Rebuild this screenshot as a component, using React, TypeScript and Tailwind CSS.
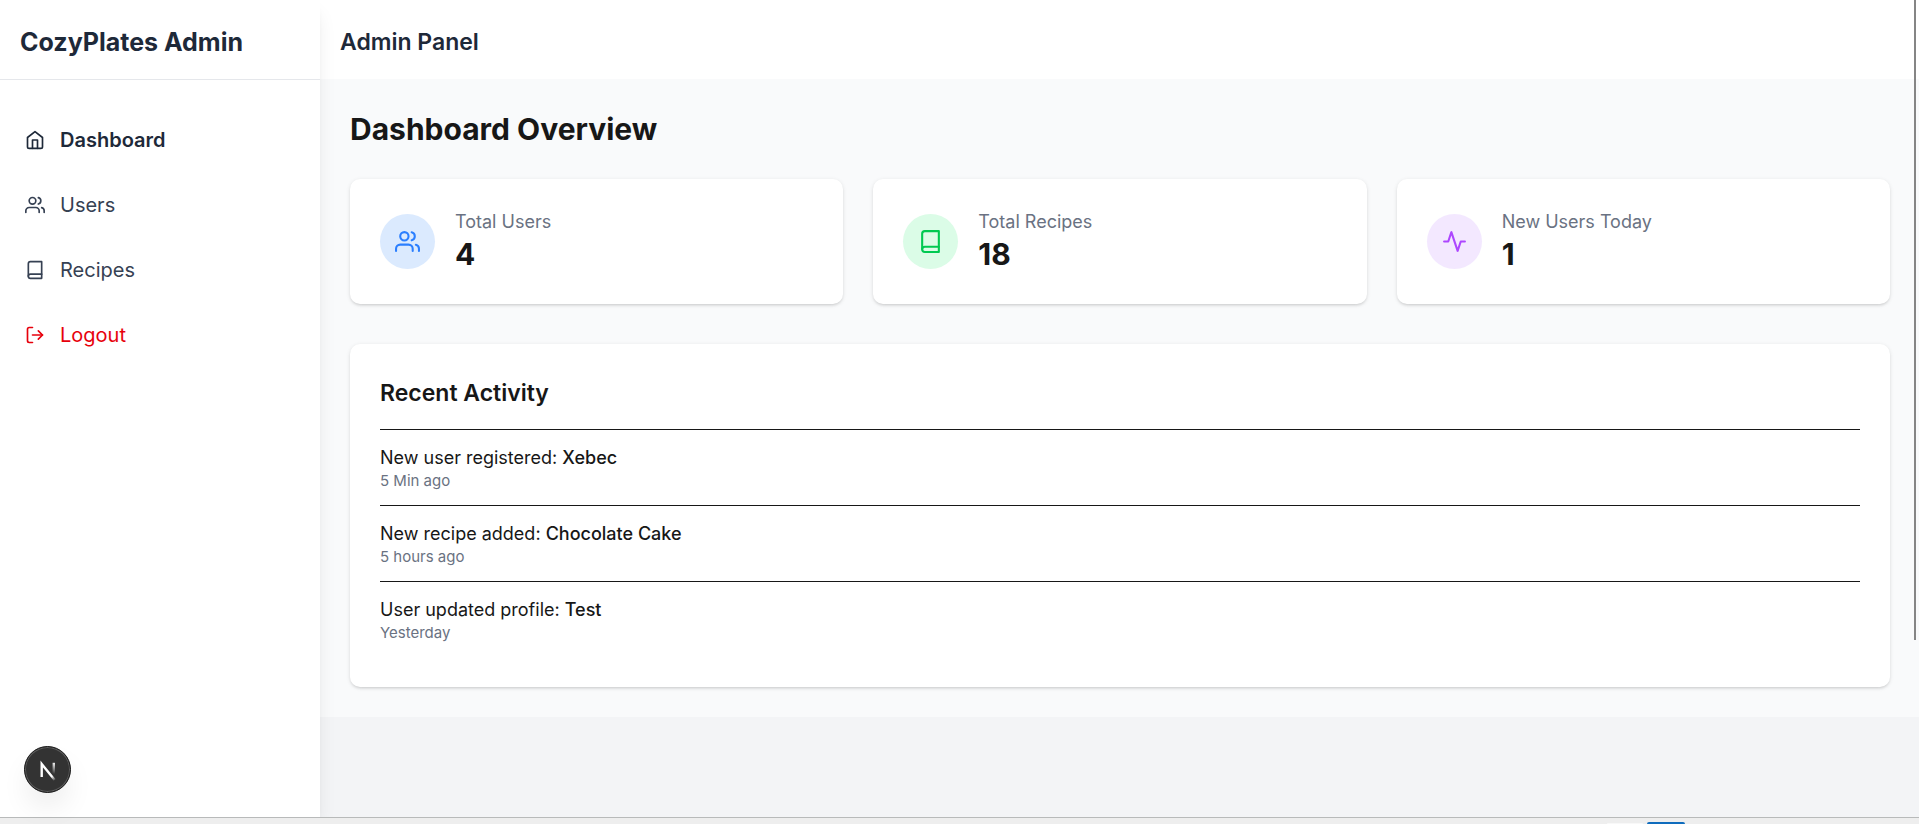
import type { ReactNode } from "react";
import { FiActivity, FiBook, FiHome, FiLogOut, FiUsers } from "react-icons/fi";
import type { IconType } from "react-icons";

type NavItem = { label: string; icon: IconType; tone: string };

const navItems: NavItem[] = [
  { label: "Dashboard", icon: FiHome, tone: "font-semibold text-gray-800" },
  { label: "Users", icon: FiUsers, tone: "text-gray-700" },
  { label: "Recipes", icon: FiBook, tone: "text-gray-700" },
];

type Stat = { label: string; value: number; icon: IconType; tone: string };

const stats: Stat[] = [
  { label: "Total Users", value: 4, icon: FiUsers, tone: "bg-blue-100 text-blue-500" },
  { label: "Total Recipes", value: 18, icon: FiBook, tone: "bg-green-100 text-green-500" },
  { label: "New Users Today", value: 1, icon: FiActivity, tone: "bg-purple-100 text-purple-500" },
];

const activities = [
  { text: "New user registered:", subject: "Xebec", time: "5 Min ago" },
  { text: "New recipe added:", subject: "Chocolate Cake", time: "5 hours ago" },
  { text: "User updated profile:", subject: "Test", time: "Yesterday" },
];

function Card({ children, className = "" }: { children: ReactNode; className?: string }) {
  return (
    <div
      className={`rounded-[10px] bg-white px-[30px] shadow-[0_1px_4px_rgba(0,0,0,0.1),0_2px_3px_-1px_rgba(0,0,0,0.12)] ${className}`}
    >
      {children}
    </div>
  );
}

function Sidebar() {
  const row = "flex w-full items-center gap-[15px] rounded-lg p-[10px] text-[20px] leading-[30px]";
  return (
    <aside className="relative z-10 w-80 shrink-0 bg-white shadow-[0_12px_19px_-4px_rgba(0,0,0,0.1),0_5px_8px_-5px_rgba(0,0,0,0.1)]">
      <div className="flex h-20 items-center border-b border-gray-200 px-5 pt-[6px]">
        <span className="text-[25px] leading-[35px] font-bold text-gray-800">CozyPlates Admin</span>
      </div>
      <nav className="flex flex-col gap-[15px] px-[15px] pt-[35px]">
        {navItems.map(({ label, icon: Icon, tone }) => (
          <a key={label} href="#" className={`${row} ${tone}`}>
            <Icon size={20} />
            {label}
          </a>
        ))}
        <button type="button" className={`${row} text-red-600`}>
          <FiLogOut size={20} />
          Logout
        </button>
      </nav>
    </aside>
  );
}

function DevToolsButton() {
  return (
    <button
      type="button"
      aria-label="Open developer tools"
      className="absolute bottom-[31px] left-6 z-20 flex size-[47px] items-center justify-center rounded-full border border-[#171717] bg-[#333] shadow-[inset_0_0_0_1px_rgba(255,255,255,0.2),0_16px_32px_-8px_rgba(0,0,0,0.14)]"
    >
      <svg width="45" height="45" viewBox="0 0 45 45" fill="none">
        <defs>
          <linearGradient id="diagonal" x1="23" y1="22" x2="31" y2="33" gradientUnits="userSpaceOnUse">
            <stop stopColor="#fff" />
            <stop offset="0.6" stopColor="#fff" />
            <stop offset="1" stopColor="#fff" stopOpacity="0" />
          </linearGradient>
          <linearGradient id="stem" x1="28" y1="15" x2="28" y2="27" gradientUnits="userSpaceOnUse">
            <stop stopColor="#fff" />
            <stop offset="1" stopColor="#fff" stopOpacity="0" />
          </linearGradient>
        </defs>
        <path d="M16.7 30V17L29.7 33" stroke="url(#diagonal)" strokeWidth="2.4" />
        <path d="M28.8 15.8V27" stroke="url(#stem)" strokeWidth="2.4" />
      </svg>
    </button>
  );
}

export default function App() {
  return (
    <div className="relative flex h-screen flex-col overflow-hidden bg-gray-100 font-['Inter',sans-serif] text-[#171717]">
      <div className="flex min-h-0 flex-1 overflow-hidden">
        <Sidebar />
        <div className="min-w-0 flex-1">
          <header className="flex h-[79px] items-center bg-white px-5 pt-[6px]">
            <h1 className="text-[23px] leading-[35px] font-semibold text-gray-800">Admin Panel</h1>
          </header>
          <main className="bg-gray-50 py-[30px] pr-[29px] pl-[30px]">
            <h2 className="mb-[30px] text-[30px] leading-10 font-bold">Dashboard Overview</h2>
            <div className="mb-10 grid grid-cols-3 gap-[30px]">
              {stats.map(({ label, value, icon: Icon, tone }) => (
                <Card key={label} className="flex items-center gap-5 py-[30px]">
                  <div className={`rounded-full p-[15px] ${tone}`}>
                    <Icon size={25} />
                  </div>
                  <div>
                    <p className="text-[18px] leading-[25px] text-gray-500">{label}</p>
                    <p className="text-[30px] leading-10 font-bold">{value}</p>
                  </div>
                </Card>
              ))}
            </div>
            <Card className="pt-8 pb-[30px]">
              <h3 className="mb-[18px] text-[23px] leading-[35px] font-semibold">Recent Activity</h3>
              <ul>
                {activities.map(({ text, subject, time }) => (
                  <li key={text} className="border-t border-[#171717] pt-[15px] pb-[14px]">
                    <p className="text-[18px] leading-[26px]">
                      {text} <span className="font-medium">{subject}</span>
                    </p>
                    <p className="text-[15px] leading-5 text-gray-500">{time}</p>
                  </li>
                ))}
              </ul>
            </Card>
          </main>
        </div>
      </div>
      <div className="flex h-[7px] shrink-0 items-end justify-end gap-1 border-t border-[#b8baba] bg-[#eeeeee] pr-[234px]">
        <span className="h-px w-9 rounded-t-sm bg-[#f8f8f8]" />
        <span className="h-[2px] w-[38px] rounded-t-sm bg-[#0f6cbd]" />
      </div>
      <DevToolsButton />
      <div className="absolute top-0 right-[3px] z-20 h-[640px] w-[2px] bg-[#858585]" />
    </div>
  );
}
